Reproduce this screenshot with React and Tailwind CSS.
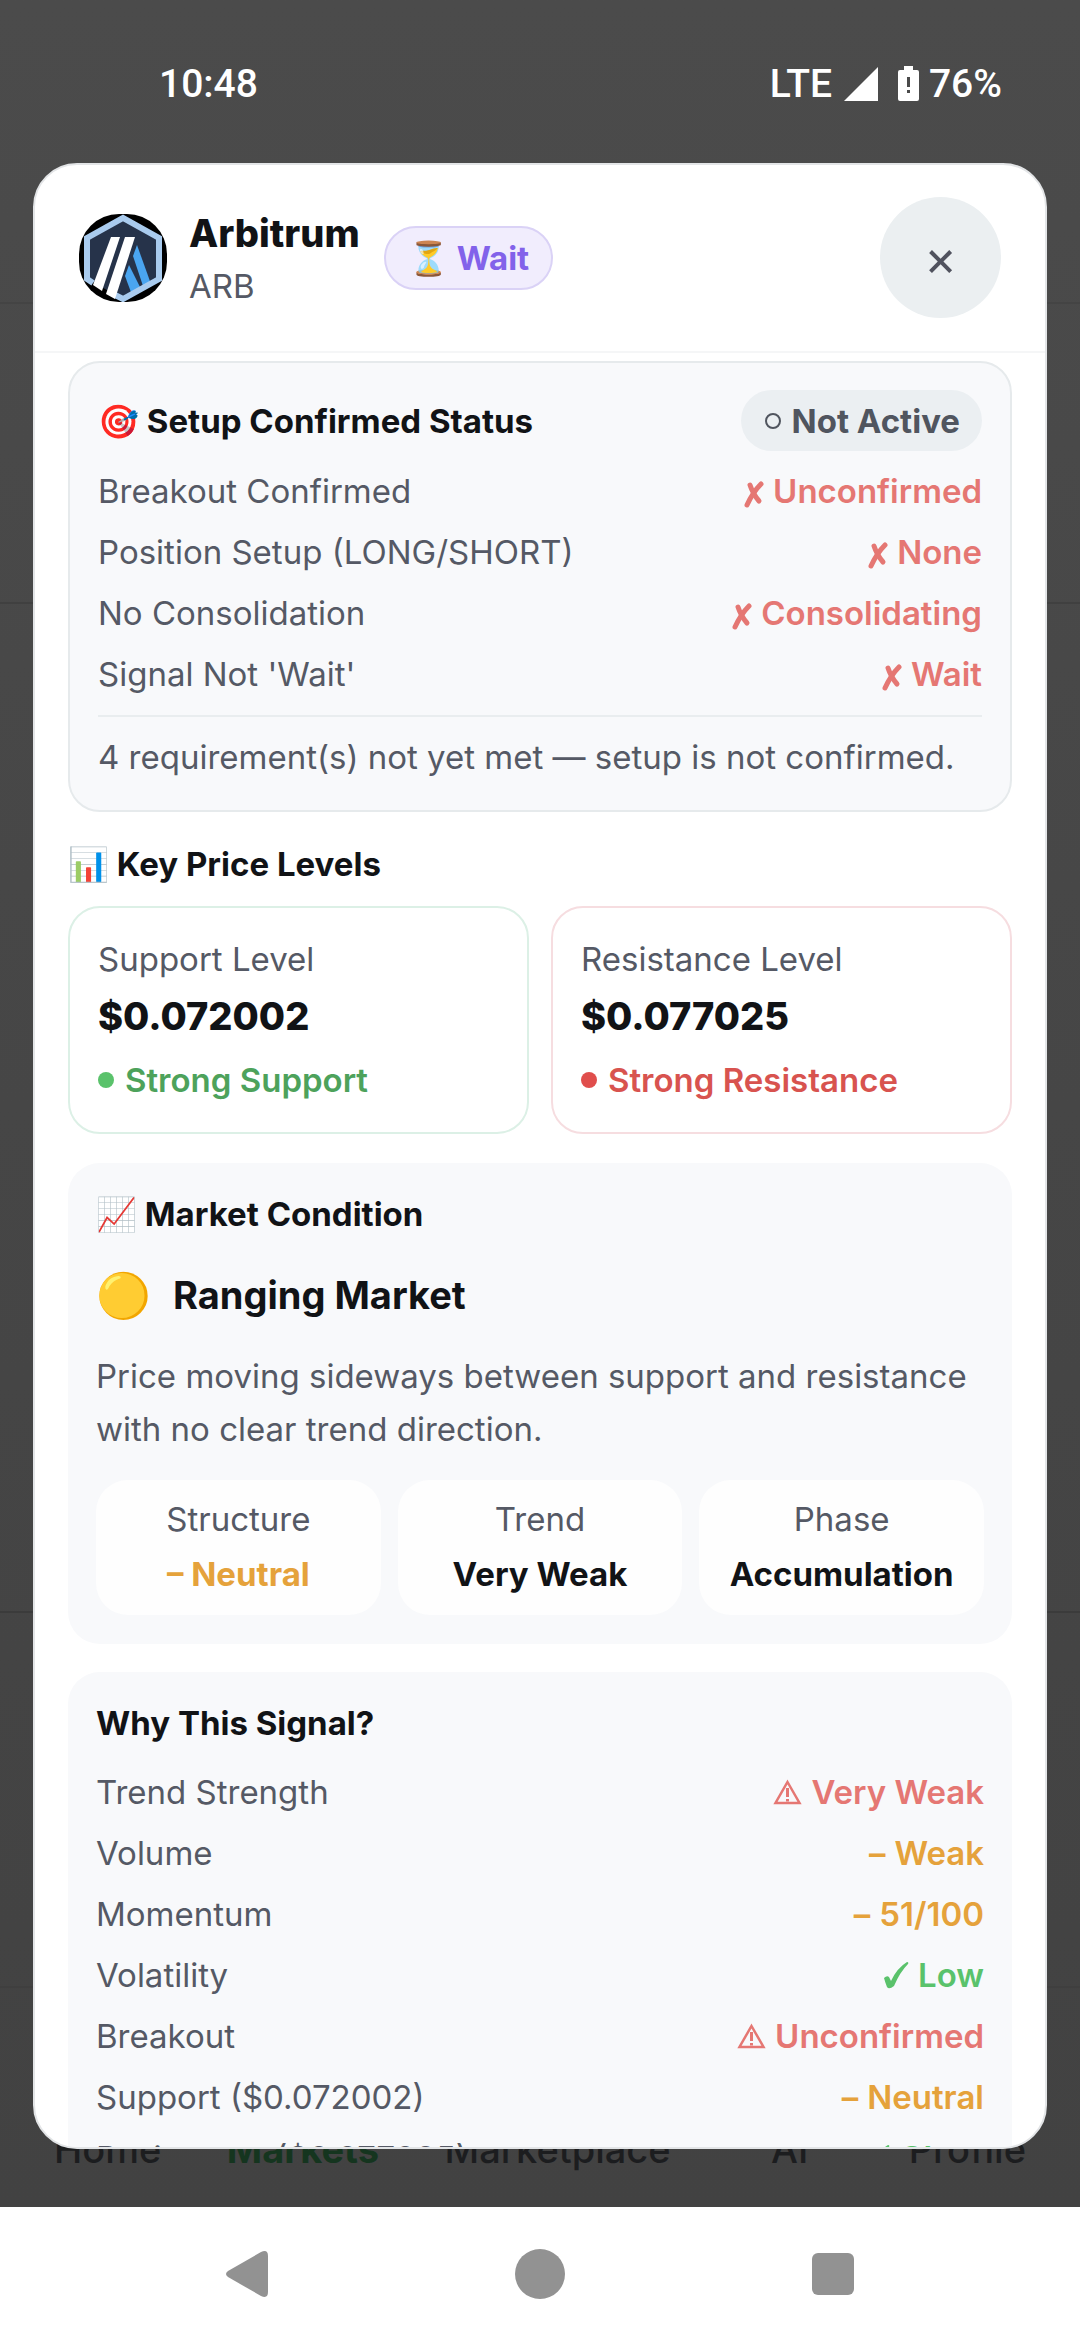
import { useState } from 'react';

const SETUP_CHECKS = [
  { label: 'Breakout Confirmed', value: 'Unconfirmed' },
  { label: 'Position Setup (LONG/SHORT)', value: 'None' },
  { label: 'No Consolidation', value: 'Consolidating' },
  { label: "Signal Not 'Wait'", value: 'Wait' },
];

const SIGNAL_REASONS = [
  { label: 'Trend Strength', value: 'Very Weak', tone: 'warn' },
  { label: 'Volume', value: 'Weak', tone: 'neutral' },
  { label: 'Momentum', value: '51/100', tone: 'neutral' },
  { label: 'Volatility', value: 'Low', tone: 'good' },
  { label: 'Breakout', value: 'Unconfirmed', tone: 'warn' },
  { label: 'Support ($0.072002)', value: 'Neutral', tone: 'neutral' },
  { label: 'Resistance ($0.077025)', value: 'Clear', tone: 'good' },
];

const TONE_COLORS = {
  bad: 'text-[#e57773]',
  warn: 'text-[#e57773]',
  neutral: 'text-[#e5a23b]',
  good: 'text-[#5ac26b]',
};

function ArbitrumLogo() {
  return (
    <svg className="w-[88px] h-[88px] rounded-[40px] shrink-0" viewBox="0 0 88 88" aria-hidden="true">
      <rect width="88" height="88" fill="#000" />
      <path d="M44 4 L80 24 V65 L44 85 L8 65 V24 Z" fill="#26334a" />
      <path d="M58 31 L72 70 L65 75 L54 42 Z" fill="#4aa5f0" />
      <path d="M50 51 L62 75 L53 81 L46 62 Z" fill="#4aa5f0" />
      <path d="M14 69 L8 65 V24 L44 4 L80 24 V65 L44 85 L36 81" fill="none" stroke="#a9cbee" strokeWidth="6" />
      <path d="M32 23 H41 L23 77 L14 71 Z" fill="#fff" />
      <path d="M46 23 H56 L36 85 L27 80 Z" fill="#fff" />
    </svg>
  );
}

function ToneMark({ tone }) {
  if (tone === 'bad') {
    return (
      <svg className="w-[20px] h-[34px]" viewBox="0 0 20 34" fill="none" stroke="currentColor" strokeLinecap="round" aria-hidden="true">
        <path d="M17 10 Q9 18 3 31" strokeWidth="5" />
        <path d="M6 11 Q9 20 15 27" strokeWidth="5" />
      </svg>
    );
  }
  if (tone === 'good') {
    return (
      <svg className="w-[26px] h-[28px]" viewBox="0 0 26 28" fill="currentColor" aria-hidden="true">
        <path d="M1 17 Q4 14 6 16 Q7 18 8 20 Q14 7 24 1 Q26 1 25 3 Q17 11 11 25 Q6 29 4 26 Q2 21 1 17 Z" />
      </svg>
    );
  }
  if (tone === 'warn') {
    return (
      <svg className="w-[29px] h-[26px]" viewBox="0 0 29 26" fill="none" stroke="currentColor" aria-hidden="true">
        <path d="M14.500 3 L26.500 24 H2.500 Z" strokeWidth="2.500" />
        <path d="M14.500 9 V18 M14.500 20 V22.500" strokeWidth="3" />
      </svg>
    );
  }
  return <span>–</span>;
}

function StatusBar() {
  return (
    <div className="flex items-center justify-between h-[163px] pl-[159px] pr-[78px] pt-[4px] font-['Roboto',sans-serif] font-medium text-[39px] leading-[50px] text-white">
      <span>10:48</span>
      <div className="flex items-center">
        <span>LTE</span>
        <svg className="w-[34px] h-[34px] ml-[12px]" viewBox="0 0 34 34" fill="currentColor" aria-hidden="true">
          <path d="M34 0 V34 H0 Z" />
        </svg>
        <svg className="w-[21px] h-[35px] ml-[20px]" viewBox="0 0 21 35" aria-hidden="true">
          <path d="M6 0 H15 V4 H19 Q21 4 21 6 V33 Q21 35 19 35 H2 Q0 35 0 33 V6 Q0 4 2 4 H6 Z" fill="#fff" />
          <path d="M9 11 H12 V21 H9 Z M9 24 H12 V27 H9 Z" fill="#4a4a4a" />
        </svg>
        <span className="ml-[10px]">76%</span>
      </div>
    </div>
  );
}

function CheckRow({ label, value, tone }) {
  return (
    <div className="flex items-center justify-between h-[50px]">
      <dt className="text-[#555965]">{label}</dt>
      <dd className={`flex items-center gap-[9px] font-semibold ${TONE_COLORS[tone]}`}>
        <ToneMark tone={tone} />
        <span>{value}</span>
      </dd>
    </div>
  );
}

function PriceCard({ title, price, note, border, dot, text }) {
  return (
    <div className={`flex-1 rounded-[32px] border-2 px-[28px] pt-[28px] pb-[29px] bg-white ${border}`}>
      <p className="text-[#555965]">{title}</p>
      <p className="mt-[9px] text-[38px] leading-[50px] font-extrabold">{price}</p>
      <p className={`mt-[16px] flex items-center gap-[11px] font-semibold ${text}`}>
        <span className={`w-[16px] h-[16px] rounded-full ${dot}`} />
        {note}
      </p>
    </div>
  );
}

function MiniStat({ label, value, color }) {
  return (
    <div className="rounded-[32px] bg-[#fefefe] pt-[16px] pb-[18px] text-center">
      <dt className="text-[#555965]">{label}</dt>
      <dd className={`mt-[9px] font-bold ${color}`}>{value}</dd>
    </div>
  );
}

function SignalModal({ onClose }) {
  return (
    <div
      role="dialog"
      aria-label="Arbitrum signal details"
      className="flex-1 min-h-0 mx-[33px] mb-[58px] flex flex-col overflow-hidden rounded-[44px] border-2 border-[#e3e5e7] bg-white"
    >
      <header className="flex items-center justify-between px-[44px] pt-[32px] pb-[33px] border-b-2 border-[#f5f6f7]">
        <div className="flex items-center">
          <ArbitrumLogo />
          <div className="ml-[22px]">
            <h1 className="text-[38px] leading-[56px] font-extrabold">Arbitrum</h1>
            <p className="leading-[50px] text-[#555965]">ARB</p>
          </div>
          <span className="ml-[24px] flex items-center gap-[8px] h-[64px] px-[22px] rounded-full border-2 border-[#dad2f6] bg-[#f1edfd] font-bold text-[#8262ea]">
            <span>⏳</span>
            Wait
          </span>
        </div>
        <button
          type="button"
          aria-label="Close"
          onClick={onClose}
          className="w-[121px] h-[121px] rounded-full bg-[#ebeff1] text-[50px] leading-[50px] text-[#50525e]"
        >
          ×
        </button>
      </header>

      <div className="flex-1 min-h-0 overflow-hidden px-[33px] pt-[8px]">
        {/* Setup status */}
        <section className="rounded-[32px] border-2 border-[#e6eaec] bg-[#f8f9fb] px-[28px] pt-[27px] pb-[26px]">
          <div className="flex items-center justify-between h-[61px]">
            <h2 className="font-bold">🎯 Setup Confirmed Status</h2>
            <span className="flex items-center gap-[11px] h-[61px] px-[22px] rounded-full bg-[#ebeff2] font-bold text-[#50555f]">
              <span className="w-[16px] h-[16px] ml-[2px] rounded-full border-2 border-[#50555f]" />
              Not Active
            </span>
          </div>
          <dl className="mt-[15px] flex flex-col gap-[11px]">
            {SETUP_CHECKS.map((row) => (
              <CheckRow key={row.label} label={row.label} value={row.value} tone="bad" />
            ))}
          </dl>
          <p className="mt-[16px] pt-[14px] border-t-2 border-[#e9edef] leading-[53px] text-[#555965]">
            4 requirement(s) not yet met — setup is not confirmed.
          </p>
        </section>

        {/* Price levels */}
        <h2 className="mt-[29px] font-bold">📊 Key Price Levels</h2>
        <div className="mt-[19px] flex gap-[22px]">
          <PriceCard
            title="Support Level"
            price="$0.072002"
            note="Strong Support"
            border="border-[#dcf0e6]"
            dot="bg-[#5ac26b]"
            text="text-[#4da25b]"
          />
          <PriceCard
            title="Resistance Level"
            price="$0.077025"
            note="Strong Resistance"
            border="border-[#f6dde0]"
            dot="bg-[#e04e4c]"
            text="text-[#d8534f]"
          />
        </div>

        {/* Market condition */}
        <section className="mt-[29px] rounded-[32px] bg-[#f8f9fb] px-[28px] pt-[28px] pb-[29px]">
          <h2 className="font-bold">📈 Market Condition</h2>
          <div className="mt-[29px] flex items-center gap-[22px] h-[58px]">
            <span className="text-[44px] leading-[58px]">🟡</span>
            <h3 className="text-[38px] leading-[50px] font-bold">Ranging Market</h3>
          </div>
          <p className="mt-[26px] leading-[53px] text-[#555965]">
            Price moving sideways between support and resistance with no clear trend direction.
          </p>
          <dl className="mt-[24px] grid grid-cols-3 gap-[17px]">
            <MiniStat label="Structure" value="– Neutral" color="text-[#e5a23b]" />
            <MiniStat label="Trend" value="Very Weak" color="text-[#111316]" />
            <MiniStat label="Phase" value="Accumulation" color="text-[#111316]" />
          </dl>
        </section>

        {/* Signal reasons */}
        <section className="mt-[28px] rounded-[32px] bg-[#f8f9fb] px-[28px] pt-[28px] pb-[29px]">
          <h2 className="font-bold">Why This Signal?</h2>
          <dl className="mt-[21px] flex flex-col gap-[11px]">
            {SIGNAL_REASONS.map((row) => (
              <CheckRow key={row.label} {...row} />
            ))}
          </dl>
        </section>
      </div>
    </div>
  );
}

// Dimmed page that stays behind the modal
function MarketsPage() {
  return (
    <div className="h-full flex flex-col bg-linear-to-b from-[#4b4b4b] via-[#464646] to-[#424242]">
      <div className="h-[304px] border-b-2 border-[#444444]" />
      <div className="h-[300px] border-b-2 border-[#404040]" />
      <div className="h-[1009px] border-b-2 border-[#3b3b3b]" />
      <div className="h-[375px] border-b-2 border-[#3f3f3f]" />
      <nav className="mt-auto flex justify-between px-[54px] pb-[33px] text-[38px] leading-[50px] font-medium text-[#1c1d1f]">
        <a href="#home">Home</a>
        <a href="#markets" className="font-bold text-[#15351f]">Markets</a>
        <a href="#marketplace">Marketplace</a>
        <a href="#ai" className="mx-[35px]">AI</a>
        <a href="#profile">Profile</a>
      </nav>
    </div>
  );
}

export default function App() {
  const [open, setOpen] = useState(true);

  return (
    <div className="h-screen flex flex-col bg-white font-['Inter','DejaVu_Sans',sans-serif] text-[33px] leading-[46px] text-[#111316]">
      <div className="relative flex-1 min-h-0">
        <MarketsPage />
        <div className="absolute inset-0 flex flex-col">
          <StatusBar />
          {open && <SignalModal onClose={() => setOpen(false)} />}
        </div>
      </div>

      <div className="flex items-center justify-around h-[133px] px-[100px] text-[#929292]">
        <button type="button" aria-label="Back">
          <svg className="w-[50px] h-[50px]" viewBox="0 0 50 50" fill="currentColor">
            <path d="M6 22 L39 3 Q46 0 46 7 V43 Q46 50 39 47 L6 28 Q2 25 6 22 Z" />
          </svg>
        </button>
        <button type="button" aria-label="Home">
          <svg className="w-[50px] h-[50px]" viewBox="0 0 50 50" fill="currentColor">
            <circle cx="25" cy="25" r="25" />
          </svg>
        </button>
        <button type="button" aria-label="Recents">
          <svg className="w-[50px] h-[50px]" viewBox="0 0 50 50" fill="currentColor">
            <rect x="4" y="4" width="42" height="42" rx="6" />
          </svg>
        </button>
      </div>
    </div>
  );
}
